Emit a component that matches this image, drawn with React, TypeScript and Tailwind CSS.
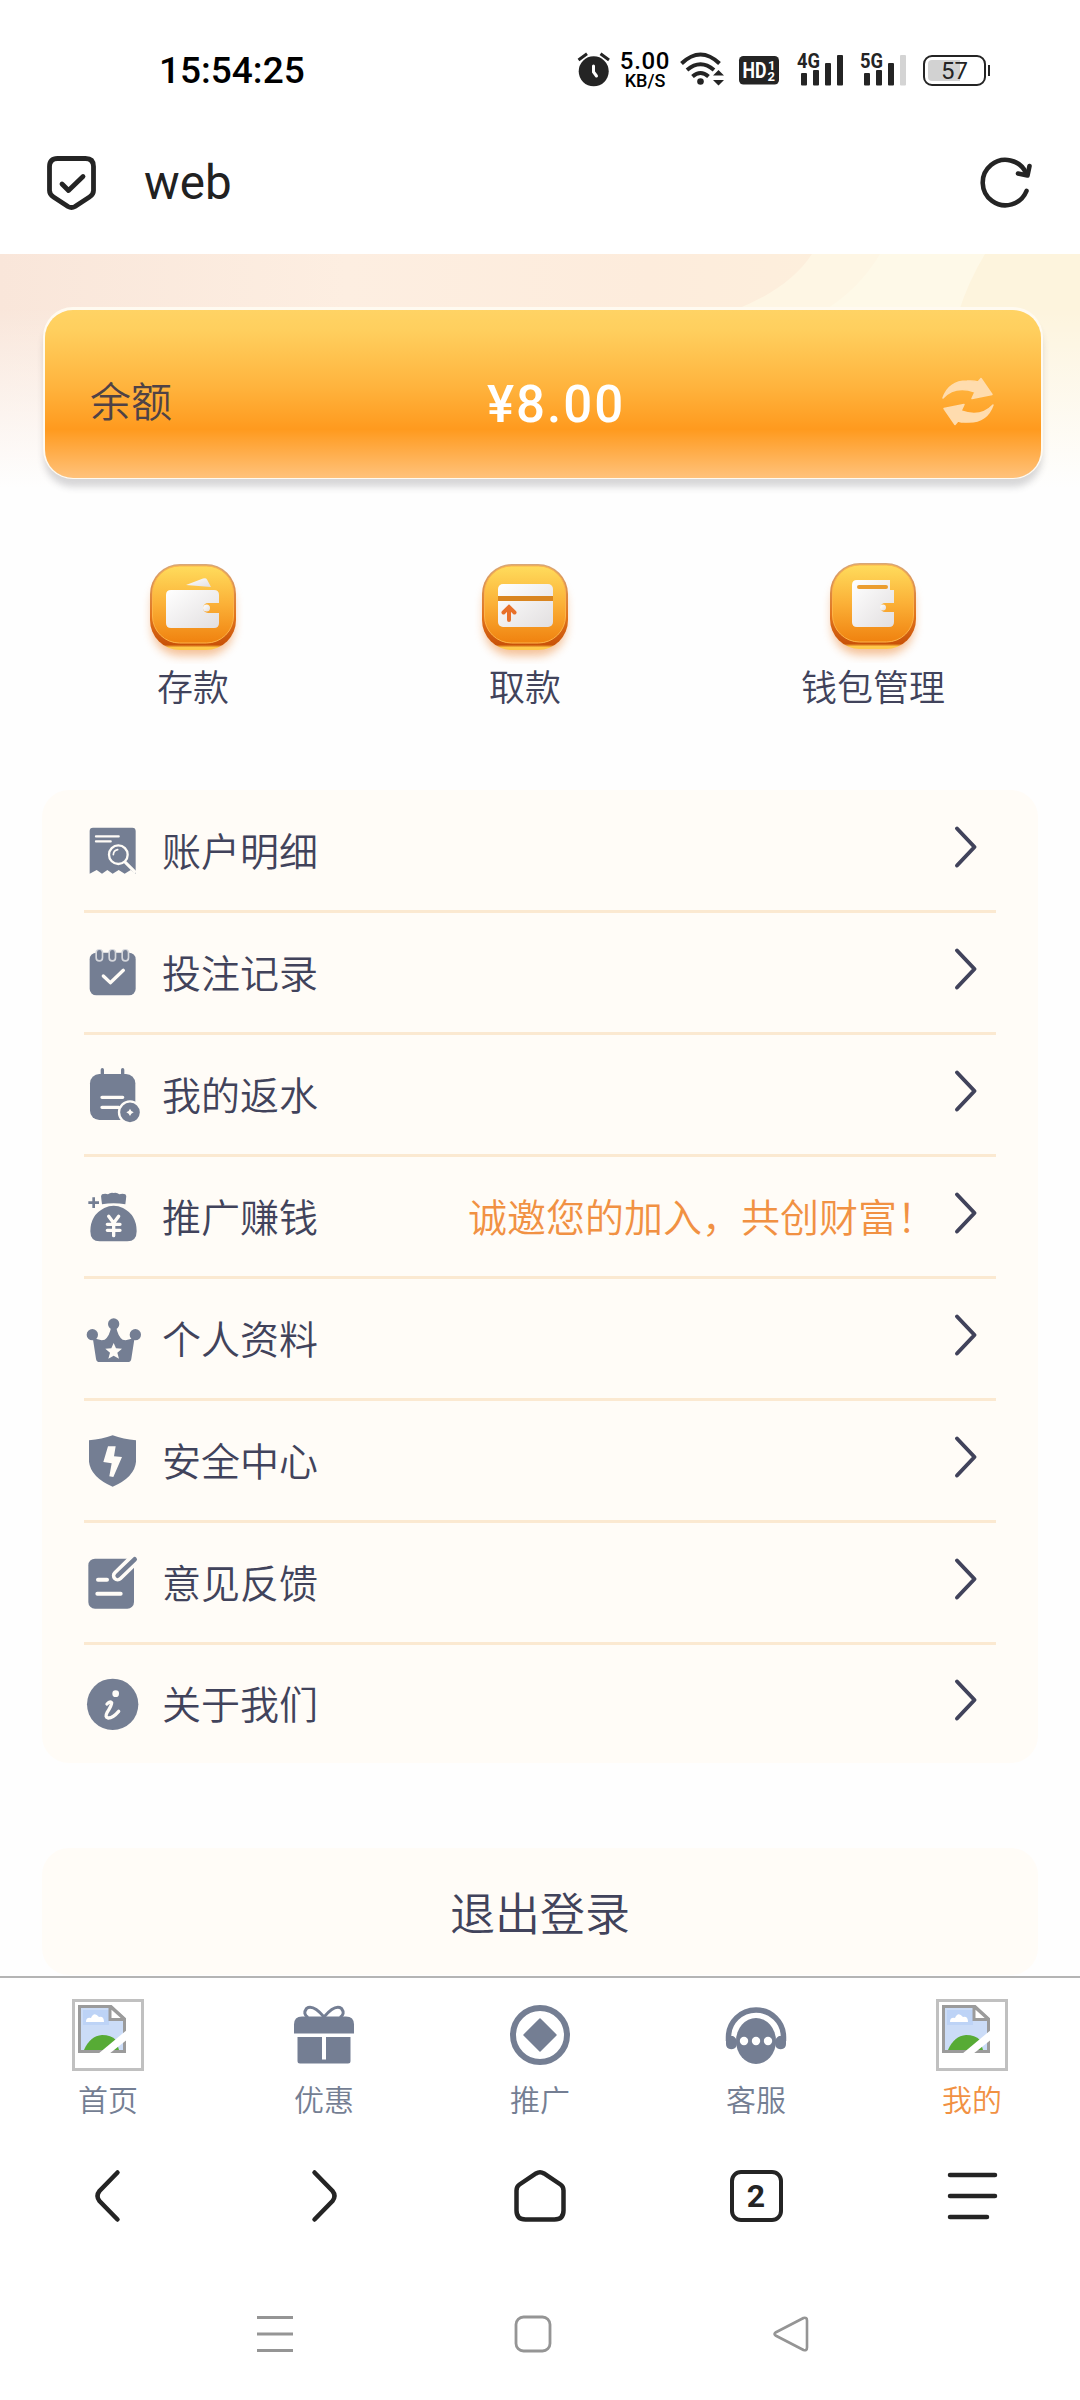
import type { ReactNode } from 'react';

const INK = '#242424';
const SLATE = '#747e93';
const CREAM = '#fffcf7';

interface MenuItem {
  label: string;
  icon: ReactNode;
  note?: string;
}

interface TabItem {
  label: string;
  icon: ReactNode;
  active?: boolean;
}

function StatusBar() {
  return (
    <div className="flex h-[140px] items-center pl-[159px]">
      <span className="w-[418px] text-[37px] leading-none font-medium text-black">15:54:25</span>
      <svg className="h-[40px] w-[36px]" viewBox="0 0 36 40">
        <circle cx="16.7" cy="21.3" r="15" fill={INK} />
        <path d="M1.5 10 10 3.8M23.5 3.8 32 10" stroke={INK} strokeWidth="3" />
        <path d="M16.5 16v6l3 4" fill="none" stroke="#fff" strokeWidth="3" strokeLinecap="round" />
      </svg>
      <div className="flex w-[64px] flex-col items-center text-black">
        <span className="text-[24px] leading-[21px] font-medium tracking-[0.7px]">5.00</span>
        <span className="text-[18px] leading-[18px] font-medium">KB/S</span>
      </div>
      <svg className="ml-[2px] h-[40px] w-[46px]" viewBox="0 0 46 40">
        <g fill="none" stroke={INK} strokeWidth="4">
          <path d="M2.500 13.500Q21.500-4.500 40.500 13.500" />
          <path d="M8 20Q21.500 8.500 35 20" />
          <path d="M13.500 26.500Q21.500 19.500 29.500 26.500" />
        </g>
        <circle cx="21.500" cy="31.500" r="3.300" fill={INK} />
        <path d="M34 25.500 39.500 20 45 25.500ZM34 30 39.500 35.500 45 30Z" fill={INK} />
      </svg>
      <svg className="ml-[14px] h-[29px] w-[40px] overflow-visible" viewBox="0 0 40 29" fontWeight="700">
        <rect width="40" height="28.500" rx="4.500" fill={INK} />
        <text x="3.500" y="22.300" fontSize="22" textLength="24" lengthAdjust="spacingAndGlyphs" fill="#fff">HD</text>
        <text x="29" y="13.500" fontSize="13" fill="#fff">1</text>
        <text x="28.500" y="25" fontSize="13" fill="#fff">2</text>
      </svg>
      <Signal label="4G" className="ml-[18px]" weak={false} />
      <Signal label="5G" className="ml-[15px]" weak />
      <div className="relative ml-[15px] flex h-[31px] w-[63px] items-center rounded-[9px] border-2 border-[#242424] pl-[3px]">
        <div className="h-[21px] w-[32px] rounded-l-[4px] bg-[#d2d2d2]" />
        <span className="absolute inset-0 text-center text-[24px] leading-[28px] text-[#242424]">57</span>
      </div>
      <div className="ml-[2px] h-[11px] w-[2px] bg-[#242424]" />
    </div>
  );
}

function Signal({ label, weak, className }: { label: string; weak: boolean; className: string }) {
  return (
    <svg className={`h-[34px] w-[48px] overflow-visible ${className}`} viewBox="0 0 48 34">
      <text x="0" y="15" fontSize="20.500" fontWeight="700" textLength="23" lengthAdjust="spacingAndGlyphs" fill={INK}>
        {label}
      </text>
      <g fill={INK}>
        <rect x="4" y="20" width="6" height="12.500" rx="1" />
        <rect x="16" y="17" width="6" height="15.500" rx="1" />
        <rect x="28" y="10" width="6" height="22.500" rx="1" />
        <rect x="40" y="2" width="6" height="30.500" rx="1" fill={weak ? '#d4d4d4' : INK} />
      </g>
    </svg>
  );
}

function AddressBar() {
  return (
    <div className="flex h-[114px] items-center px-[44px] pb-[27px]">
      <svg className="h-[60px] w-[54px]" viewBox="0 0 54 60" fill="none" stroke={INK} strokeWidth="4.800" strokeLinecap="round" strokeLinejoin="round">
        <path d="M13.500 4.500h28q8 0 8 8v24q0 4-4 6.500L31 52.500q-3.500 2-7 0L9.500 43q-4-2.500-4-6.500v-24q0-8 8-8Z" />
        <path d="M18 30l6.500 6.500L39 22.500" />
      </svg>
      <span className="ml-[46px] flex-1 text-[47.500px] leading-none text-[#212121]">web</span>
      <svg className="h-[60px] w-[56px]" viewBox="0 0 56 60" fill="none" stroke={INK} strokeWidth="4.600" strokeLinecap="round" strokeLinejoin="round">
        <path d="M46.500 37A22.700 22.700 0 1 1 46 19" />
        <path d="M38 19.500 47.500 21.500 49.500 12" />
      </svg>
    </div>
  );
}

function BalanceCard() {
  return (
    <div className="relative h-[266px] bg-[linear-gradient(90deg,#f9e6da_0%,#fdeee1_32%,#fdecdc_60%,#fdf3dc_100%)]">
      <svg className="absolute top-0 left-0 h-[266px] w-[1080px]" viewBox="0 0 1080 266">
        <path d="M812 0Q790 34 735 56L690 80V266H1080V0Z" fill="#fef6e4" />
        <path d="M880 0Q860 34 825 56V266H1080V0Z" fill="#fef9e8" />
        <path d="M985 0Q968 28 958 60V266H1080V0Z" fill="#fdf4dd" />
      </svg>
      <div className="absolute inset-0 bg-[linear-gradient(180deg,rgba(254,254,254,0)_20%,#fefefe_88%)]" />
      <div className="relative pt-[56px] pr-[39px] pl-[45px]">
        <div className="flex h-[168px] items-center rounded-[28px] bg-[linear-gradient(180deg,#ffd364_0%,#ffcf5e_12%,#ffb43e_45%,#ff9a1e_71%,#ffc27b_100%)] pt-[15px] pr-[46px] pl-[45px] shadow-[0_-1px_0_2px_#fffaf0,0_8px_7px_1px_rgba(60,60,70,0.2)]">
          <span className="mt-[4px] text-[41px] leading-none font-[350] text-[#4f4246]">余额</span>
          <span className="mt-[5px] ml-[315px] flex-1 text-[51px] leading-none font-medium tracking-[2px] text-white">¥8.00</span>
          <svg className="h-[52px] w-[54px]" viewBox="0 0 54 52" fill="#ffdcae" stroke="#ffdcae" strokeWidth="1.500" strokeLinejoin="round">
            <path d="M2 22Q8 5 26 5 33 4.500 37 6L40 2.500 51 18.500 31 22.500 34 16Q14 9 2 22Z" />
            <path d="M52 29Q46 46 28 46 21 46.500 17 45L14 48.500 3 32.500 23 28.500 20 35Q40 42 52 29Z" />
          </svg>
        </div>
      </div>
    </div>
  );
}

function ActionTile({ id, children }: { id: string; children: ReactNode }) {
  return (
    <svg className="h-[110px] w-[110px]" viewBox="0 0 110 110">
      <defs>
        <linearGradient id={`${id}-face`} x1="0" y1="0" x2="0" y2="1">
          <stop offset="0" stopColor="#ffdc5c" />
          <stop offset="0.5" stopColor="#fbb037" />
          <stop offset="1" stopColor="#f0820f" />
        </linearGradient>
        <linearGradient id={`${id}-rim`} x1="0" y1="0" x2="0" y2="1">
          <stop offset="0" stopColor="#d8a878" />
          <stop offset="0.6" stopColor="#e2741c" />
          <stop offset="0.94" stopColor="#c95208" />
          <stop offset="0.97" stopColor="#ffc94a" />
        </linearGradient>
        <linearGradient id={`${id}-paper`} x1="0" y1="0" x2="1" y2="1">
          <stop offset="0" stopColor="#ffffff" />
          <stop offset="1" stopColor="#e2dfe0" />
        </linearGradient>
        <filter id={`${id}-glow`} x="-30%" y="-30%" width="160%" height="160%">
          <feGaussianBlur stdDeviation="5" />
        </filter>
      </defs>
      <rect x="14" y="22" width="82" height="80" rx="28" fill="#f0a060" opacity="0.650" filter={`url(#${id}-glow)`} />
      <rect x="12" y="10" width="86" height="86" rx="30" fill={`url(#${id}-rim)`} />
      <rect x="14.500" y="12" width="81" height="77" rx="27" fill={`url(#${id}-face)`} stroke="#fdb54a" strokeWidth="1" />
      <g fill={`url(#${id}-paper)`}>{children}</g>
    </svg>
  );
}

function Actions() {
  return (
    <div className="flex h-[270px] pt-[34px]">
      <div className="ml-[103px] flex w-[180px] flex-col items-center">
        <ActionTile id="deposit">
          <path d="M48 31 65 24.500q3-1 4 1l4 7.500Z" />
          <path d="M33 36H76q5 0 5 5v8H70a5 5 0 0 0 0 10H81V69q0 5-5 5H33q-5 0-5-5V41q0-5 5-5Z" />
          <circle cx="68.500" cy="54" r="3.500" />
        </ActionTile>
        <span className="text-[36px] leading-[50px] font-[350] text-[#41435b]">存款</span>
      </div>
      <div className="ml-[152px] flex w-[180px] flex-col items-center">
        <ActionTile id="withdraw">
          <rect x="28" y="30" width="55" height="43" rx="5" />
          <path d="M28 42h55v5H28Z" fill="#d98520" />
          <path d="M39 66V54M33.500 58.500 39 53l5.500 5.500" fill="none" stroke="#e8702a" strokeWidth="4" strokeLinecap="round" />
        </ActionTile>
        <span className="text-[36px] leading-[50px] font-[350] text-[#41435b]">取款</span>
      </div>
      <div className="-mt-px ml-[168px] flex w-[180px] flex-col items-center">
        <ActionTile id="wallet">
          <path d="M39 27H72v10h4v13H67a4.500 4.500 0 0 0 0 9H76V69q0 5-5 5H39q-5 0-5-5V32q0-5 5-5Z" />
          <path d="M41 34H68" stroke="#eb9d30" strokeWidth="4" strokeLinecap="round" />
          <circle cx="65" cy="54.500" r="3" />
        </ActionTile>
        <span className="text-[36px] leading-[52px] font-[350] text-[#41435b]">钱包管理</span>
      </div>
    </div>
  );
}

function MenuGlyph({ children }: { children: ReactNode }) {
  return (
    <svg className="h-[60px] w-[60px] shrink-0" viewBox="0 0 180 180" fill={SLATE} strokeLinecap="round" strokeLinejoin="round">
      {children}
    </svg>
  );
}

const menuItems: MenuItem[] = [
  {
    label: '账户明细',
    icon: (
      <MenuGlyph>
        <path d="M27 20H145q10 0 10 10V158L140 147 122 158 104 147 86 158 70 147 54 158 38 147 17 158V30q0-10 10-10Z" />
        <g fill="none" stroke={CREAM}>
          <path d="M36 46h68M36 61h44" strokeWidth="7" />
          <circle cx="103" cy="101" r="28" strokeWidth="7" />
          <path d="M88 101q1-13 13-15" strokeWidth="5" />
          <path d="M124 124l28 28" strokeWidth="9" />
        </g>
      </MenuGlyph>
    ),
  },
  {
    label: '投注记录',
    icon: (
      <MenuGlyph>
        <rect x="17" y="29" width="138" height="128" rx="20" />
        <path d="M46 30v14M85 30v14M124 30v14" stroke="#d5d7dc" strokeWidth="24" />
        <path d="M46 28v16M85 28v16M124 28v16" stroke={SLATE} strokeWidth="14" />
        <path d="M58 99l21 20 39-37" fill="none" stroke={CREAM} strokeWidth="10" />
      </MenuGlyph>
    ),
  },
  {
    label: '我的返水',
    icon: (
      <MenuGlyph>
        <rect x="18" y="27" width="136" height="138" rx="28" />
        <path d="M55 14v20M116 14v20" stroke={SLATE} strokeWidth="10" />
        <path d="M54 97h62M54 127h50" stroke={CREAM} strokeWidth="10" />
        <circle cx="138" cy="142" r="33" stroke={CREAM} strokeWidth="7" />
        <path d="M138 131l4 7 7 4-7 4-4 7-4-7-7-4 7-4Z" fill={CREAM} />
      </MenuGlyph>
    ),
  },
  {
    label: '推广赚钱',
    note: '诚邀您的加入，共创财富！',
    icon: (
      <MenuGlyph>
        <path d="M13 47h32M29 31v32" stroke={SLATE} strokeWidth="8" strokeLinecap="butt" />
        <path d="M54 22q10-4 18 0 8-7 17-4 9-3 17 4 10-4 18 0 6 6 2 14l-2 16Q89 46 54 52l-2-16q-4-8 2-14Z" />
        <path d="M61 63Q89 49 117 63 158 84 158 133q0 30-28 30H47q-28 0-28-30Q19 84 61 63Z" />
        <path d="M74 88l15 20 15-20M89 108v38M70 112h38M70 130h38" fill="none" stroke={CREAM} strokeWidth="10" />
      </MenuGlyph>
    ),
  },
  {
    label: '个人资料',
    icon: (
      <MenuGlyph>
        <circle cx="25" cy="77" r="17" />
        <circle cx="89" cy="45" r="17" />
        <circle cx="154" cy="77" r="17" />
        <path d="M26 85Q48 97 62 92 76 84 82 52H96Q102 84 116 92 130 97 152 85L142 149q-1 10-11 10H47q-10 0-11-10Z" />
        <path d="M89 102l7 16 18 1-14 12 5 18-16-9-16 9 5-18-14-12 18-1Z" fill={CREAM} />
      </MenuGlyph>
    ),
  },
  {
    label: '安全中心',
    icon: (
      <MenuGlyph>
        <path d="M86 13Q118 25 156 28V92Q152 138 86 167 20 138 15 92V28Q54 25 86 13Z" />
        <path d="M72 46H95L90 76 114 78 88 138 76 136 83 97 58 93Z" fill={CREAM} />
      </MenuGlyph>
    ),
  },
  {
    label: '意见反馈',
    icon: (
      <MenuGlyph>
        <rect x="13" y="17" width="137" height="150" rx="20" />
        <path d="M158 12 101 68" stroke={CREAM} strokeWidth="35" />
        <path d="M152 19 101 68" stroke={SLATE} strokeWidth="14" />
        <path d="M42 80h27M40 122h70" stroke={CREAM} strokeWidth="12" />
      </MenuGlyph>
    ),
  },
  {
    label: '关于我们',
    icon: (
      <MenuGlyph>
        <circle cx="86" cy="91" r="77" />
        <circle cx="95" cy="59" r="10" fill={CREAM} />
        <path d="M69 90q8-9 14-4 0 8-14 30-7 13 3 16 14 1 32-20" fill="none" stroke={CREAM} strokeWidth="10" />
      </MenuGlyph>
    ),
  },
];

function MenuList() {
  return (
    <div className="mx-[42px] h-[973px] rounded-[27px] bg-[#fffcf7] px-[42px] pt-px">
      {menuItems.map(item => (
        <div key={item.label} className="flex h-[122px] items-center border-b-[3px] border-[#fbe9d1] last:h-[118px] last:border-b-0">
          {item.icon}
          <span className="mt-[5px] ml-[18px] text-[39px] leading-none font-[350] text-[#41435b]">{item.label}</span>
          <span className="mt-[5px] ml-auto text-[39px] leading-none font-[350] text-[#f19143]">{item.note}</span>
          <svg className="mr-[17px] mb-[8px] ml-[17px] h-[44px] w-[26px]" viewBox="0 0 26 44" fill="none">
            <path d="M4 3.500 21.500 22 4 40.500" stroke="#41435b" strokeWidth="4" strokeLinecap="round" strokeLinejoin="round" />
          </svg>
        </div>
      ))}
    </div>
  );
}

function BrokenImage() {
  return (
    <div className="h-[72px] w-[72px] border-[3px] border-[#c0c0c0] p-[3px]">
      <svg className="h-[48px] w-[48px]" viewBox="0 0 48 48">
        <path d="M1.500 1.500H33L46.500 14V46.500H1.500Z" fill="#cbdcf7" stroke="#9b9b9b" strokeWidth="3" />
        <path d="M5 20V5H31V20Z" fill="#bdd3f6" />
        <path d="M8 17q0-5 5-4 3-7 8-1 5-1 5 5Z" fill="#fff" />
        <path d="M6 45Q12 31 24 30q9 0 14 5l3 10Z" fill="#57ab35" />
        <path d="M32 1.500V14.500H46.500Z" fill="#fff" stroke="#9b9b9b" strokeWidth="3" />
        <path d="M20 49 50 24V34L31 49Z" fill="#fff" />
      </svg>
    </div>
  );
}

const tabItems: TabItem[] = [
  { label: '首页', icon: <BrokenImage /> },
  {
    label: '优惠',
    icon: (
      <svg className="h-[72px] w-[72px]" viewBox="0 0 72 72" fill={SLATE}>
        <path d="M36 18Q25 5 18.500 9.500 14.500 15 20 18.500M36 18Q47 5 53.500 9.500 57.500 15 52 18.500" fill="none" stroke={SLATE} strokeWidth="3" />
        <path d="M14 17.500H58q8 0 8 8v9H6v-9q0-8 8-8Z" />
        <path d="M9.500 38H34V60.500H38V38H62.500V62q0 2.500-2.500 2.500H12q-2.500 0-2.500-2.500Z" />
      </svg>
    ),
  },
  {
    label: '推广',
    icon: (
      <svg className="h-[72px] w-[72px]" viewBox="0 0 72 72" fill={SLATE}>
        <circle cx="36" cy="36" r="27" fill="none" stroke={SLATE} strokeWidth="6" />
        <path d="M36 20 52 36 36 52 20 36Z" stroke={SLATE} strokeWidth="1.500" strokeLinejoin="round" />
      </svg>
    ),
  },
  {
    label: '客服',
    icon: (
      <svg className="h-[72px] w-[72px]" viewBox="0 0 72 72" fill={SLATE}>
        <path d="M8.500 42V38a27.500 27 0 0 1 55 0v4" fill="none" stroke={SLATE} strokeWidth="5.500" />
        <path d="M6 37h7q4 2 4 7t-4 6q-7 1-7-5ZM66 37h-7q-4 2-4 7t4 6q7 1 7-5Z" />
        <ellipse cx="36" cy="42" rx="20" ry="23" />
        <g fill="#fff">
          <circle cx="24" cy="42" r="4.200" />
          <circle cx="36" cy="42" r="4.200" />
          <circle cx="48" cy="42" r="4.200" />
        </g>
      </svg>
    ),
  },
  { label: '我的', icon: <BrokenImage />, active: true },
];

function TabBar() {
  return (
    <div className="grid h-[154px] grid-cols-5 border-t-[2px] border-[#b4b4b4] bg-white pt-[21px]">
      {tabItems.map(tab => (
        <div key={tab.label} className="flex flex-col items-center">
          {tab.icon}
          <span className={`mt-[7px] text-[30px] leading-[45px] font-[350] ${tab.active ? 'text-[#f19143]' : 'text-[#747e93]'}`}>
            {tab.label}
          </span>
        </div>
      ))}
    </div>
  );
}

function BrowserBar() {
  return (
    <div className="grid h-[132px] grid-cols-5 items-center justify-items-center bg-white">
      <svg className="h-[60px] w-[60px]" viewBox="0 0 60 60" fill="none" stroke={INK} strokeWidth="4.500" strokeLinecap="round">
        <path d="M39.500 6.500 21.500 25q-4 5 0 10L39.500 53.500" />
      </svg>
      <svg className="h-[60px] w-[60px]" viewBox="0 0 60 60" fill="none" stroke={INK} strokeWidth="4.500" strokeLinecap="round">
        <path d="M20.500 6.500 38.500 25q4 5 0 10L20.500 53.500" />
      </svg>
      <svg className="h-[60px] w-[60px]" viewBox="0 0 60 60" fill="none" stroke={INK} strokeWidth="4.500">
        <path d="M26 7.500q4-2.500 8 0L50.500 18.500q3 2 3 6V44.500q0 9-9 9H15.500q-9 0-9-9V24.500q0-4 3-6Z" />
      </svg>
      <div className="flex h-[52px] w-[53px] items-center justify-center rounded-[11px] border-[4.500px] border-[#242424] text-[32px] leading-none font-bold text-[#242424]">
        2
      </div>
      <svg className="h-[60px] w-[60px]" viewBox="0 0 60 60" stroke={INK} strokeWidth="4.500" strokeLinecap="round">
        <path d="M8 9H53M8 30H53M8 51H45" />
      </svg>
    </div>
  );
}

function SystemBar() {
  return (
    <div className="flex h-[138px] items-center bg-white pt-[6px] pl-[255px]">
      <svg className="h-[40px] w-[40px]" viewBox="0 0 40 40" stroke="#959595" strokeWidth="3">
        <path d="M2 3.500H38M2 20H38M2 36.500H38" />
      </svg>
      <svg className="ml-[218px] h-[40px] w-[40px]" viewBox="0 0 40 40" fill="none" stroke="#959595" strokeWidth="2.800">
        <rect x="3" y="3" width="34" height="34" rx="7.500" />
      </svg>
      <svg className="ml-[218px] h-[40px] w-[40px]" viewBox="0 0 40 40" fill="none" stroke="#959595" strokeWidth="2.600" strokeLinejoin="round">
        <path d="M4.500 18.500 32.500 4q3.500-1 3.500 2.500V33.500q0 3.500-3.500 2.500L4.500 21.500q-2-1.500 0-3Z" />
      </svg>
    </div>
  );
}

export default function App() {
  return (
    <div className="h-[2400px] w-[1080px] overflow-hidden bg-[#fefefe] font-[Roboto,'Noto_Sans_CJK_SC',sans-serif]">
      <div className="bg-white">
        <StatusBar />
        <AddressBar />
      </div>
      <BalanceCard />
      <Actions />
      <MenuList />
      <div className="mx-[42px] mt-[85px] mb-[1px] flex h-[127px] items-center justify-center rounded-[27px] bg-[#fffcf7] pt-[7px] text-[45px] leading-none font-[350] text-[#41435b]">
        退出登录
      </div>
      <TabBar />
      <BrowserBar />
      <SystemBar />
    </div>
  );
}
